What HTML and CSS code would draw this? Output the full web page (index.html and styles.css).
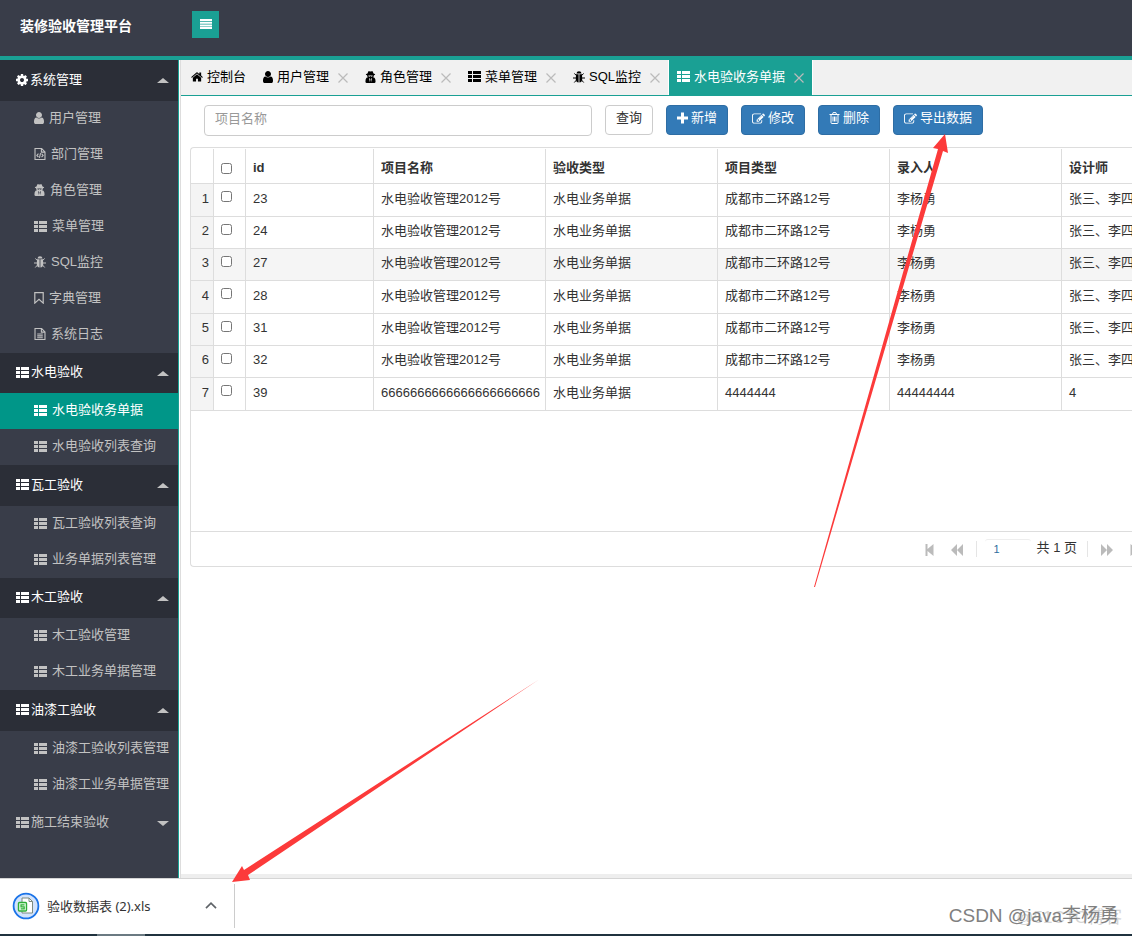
FILE: index.html
```html
<!DOCTYPE html>
<html lang="zh-CN">
<head>
<meta charset="utf-8">
<title>装修验收管理平台</title>
<link rel="stylesheet" href="styles.css">
</head>
<body>
<svg class="sprite" aria-hidden="true">
  <symbol id="list" viewBox="0 0 13 11"><path d="M0 0h4v3H0zM5 0h8v3H5zM0 4h4v3H0zM5 4h8v3H5zM0 8h4v3H0zM5 8h8v3H5z"/></symbol>
  <symbol id="cog" viewBox="128 128 1536 1536"><path d="M1152 896q0-106-75-181t-181-75-181 75-75 181 75 181 181 75 181-75 75-181zm512-109v222q0 12-8 23t-20 13l-185 28q-19 54-39 91 35 50 107 138 10 12 10 25t-9 23q-27 37-99 108t-94 71q-12 0-26-9l-138-108q-44 23-91 38-16 136-29 186-7 28-36 28h-222q-14 0-24.5-8.5t-11.5-21.5l-28-184q-49-16-90-37l-141 107q-10 9-25 9-14 0-25-11-126-114-165-168-7-10-7-23 0-12 8-23 15-21 51-66.5t54-70.5q-27-50-41-99l-183-27q-13-2-21-12.5t-8-23.5v-222q0-12 8-23t19-13l186-28q14-46 39-92-40-57-107-138-10-12-10-24 0-10 9-23 26-36 98.5-107.5t94.5-71.5q13 0 26 10l138 107q44-23 91-38 16-136 29-186 7-28 36-28h222q14 0 24.5 8.5t11.5 21.5l28 184q49 16 90 37l142-107q9-9 24-9 13 0 25 10 129 119 165 170 7 8 7 22 0 12-8 23-15 21-51 66.5t-54 70.5q26 50 41 98l183 28q13 2 21 12.5t8 23.5z"/></symbol>
  <symbol id="user" viewBox="256 128 1280 1536"><path d="M1536 1399q0 109-62.5 187t-150.5 78h-854q-88 0-150.5-78t-62.5-187q0-85 8.5-160.5t31.5-152 58.5-131 94-89 134.5-34.5q131 128 313 128t313-128q76 0 134.5 34.5t94 89 58.5 131 31.5 152 8.5 160.5zm-256-887q0 159-112.5 271.5t-271.5 112.5-271.5-112.5-112.5-271.5 112.5-271.5 271.5-112.5 271.5 112.5 112.5 271.5z"/></symbol>
  <symbol id="home" viewBox="64 250 1664 1290"><path d="M1472 992v480q0 26-19 45t-45 19h-384v-384h-256v384h-384q-26 0-45-19t-19-45v-480q0-1 .5-3t.5-3l575-474 575 474q1 2 1 6zm223-69l-62 74q-8 9-21 11h-3q-13 0-21-7l-692-577-692 577q-12 8-24 7-13-2-21-11l-62-74q-8-10-7-23.5t11-21.5l719-599q32-26 76-26t76 26l244 204v-195q0-14 9-23t23-9h192q14 0 23 9t9 23v408l219 182q10 8 11 21.5t-7 23.5z"/></symbol>
  <symbol id="edit" viewBox="0 128 1792 1408"><path d="M888 1184l116-116-152-152-116 116v56h96v96h56zm440-720q-16-16-33 1l-350 350q-17 17-1 33t33-1l350-350q17-17 1-33zm80 594v190q0 119-84.5 203.5t-203.5 84.5h-832q-119 0-203.5-84.5t-84.5-203.5v-832q0-119 84.5-203.5t203.5-84.5h832q63 0 117 25 15 7 18 23 3 17-9 29l-49 49q-14 14-32 8-23-6-45-6h-832q-66 0-113 47t-47 113v832q0 66 47 113t113 47h832q66 0 113-47t47-113v-126q0-13 9-22l64-64q15-15 35-7t20 29zm-96-738l288 288-672 672h-288v-288zm444 132l-92 92-288-288 92-92q28-28 68-28t68 28l152 152q28 28 28 68t-28 68z"/></symbol>
  <symbol id="secret" viewBox="0 0 11 13"><path fill-rule="evenodd" d="M3.200.4Q4 0 5.500.6 7 0 7.800.4L8.800 2.700Q10.600 3.100 10.600 3.700 10.200 4.400 9.200 4.500 9.100 6 8.300 6.800L9.800 7.300Q11 8.500 11 11.300 10.900 13 9.600 13H1.400Q.1 13 0 11.300 0 8.500 1.200 7.300L2.700 6.800Q1.900 6 1.800 4.500.8 4.400.4 3.700.4 3.100 2.200 2.700zM3.200 5v.8l1.600.3.500-.7h.4l.5.7 1.600-.3V5zM3.900 7.800L4.900 12.200 5.200 9.200 4.800 8.200zM7.100 7.800L6.100 12.200 5.800 9.200 6.200 8.200z"/></symbol>
  <symbol id="bug" viewBox="0 0 12 12"><path d="M3.500 2.600Q3.700.2 6 .2T8.500 2.600z"/><path d="M3 3.200H5.600V11.600Q3 11.300 2.800 8.500zM9 3.200H6.400V11.600Q9 11.300 9.200 8.500z"/><path fill="none" stroke="currentColor" d="M3.500 4.500L1.300 2.500M3 7H0M3.500 9L1.300 11.500M8.500 4.500l2.200-2M9 7h3M8.500 9l2.200 2.500"/></symbol>
  <symbol id="code" viewBox="0 0 12 13"><path fill="none" stroke="currentColor" stroke-width="1.200" d="M.6.600h7.200l3.600 3.600v8.200H.6zM7.500.6v3.900h3.900M4.300 6L2.600 8l1.700 2M7.700 6l1.700 2-1.700 2M6.600 5.500l-1.200 5.300"/></symbol>
  <symbol id="file" viewBox="0 0 12 13"><path fill="none" stroke="currentColor" stroke-width="1.200" d="M.6.600h7.200l3.600 3.600v8.200H.6zM7.500.6v3.900h3.900M3 6.500h6M3 8.500h6M3 10.500h6"/></symbol>
  <symbol id="bookmark" viewBox="0 0 10 12"><path fill="none" stroke="currentColor" stroke-width="1.200" d="M.8.700h8.400v10.400L5 7.400.8 11.100z"/></symbol>
  <symbol id="plus" viewBox="0 0 11 11"><path d="M4 0h3v4h4v3H7v4H4V7H0V4h4z"/></symbol>
  <symbol id="trash" viewBox="0 0 10 12"><path fill="none" stroke="currentColor" d="M0 2.500h10M3 2.300L3.600.6h2.800L7 2.300M1.500 2.500v8q0 1 1 1h5q1 0 1-1v-8M3.500 4.500v5M5 4.500v5M6.500 4.500v5"/></symbol>
  <symbol id="close" viewBox="0 0 10 10"><path fill="none" stroke="currentColor" stroke-width="1.200" d="M.5.5l9 9M9.500.5l-9 9"/></symbol>
  <symbol id="bars" viewBox="0 0 12 10"><path d="M0 0h12v2H0zM0 2.700h12v2H0zM0 5.400h12v2H0zM0 8h12v2H0z"/></symbol>
  <symbol id="first" viewBox="0 0 9 12"><path d="M0 0h2v5l6-5v12L2 7v5H0z"/></symbol>
  <symbol id="prev" viewBox="0 0 12 12"><path d="M0 6l6-6v12zM6 6l6-6v12z"/></symbol>
  <symbol id="next" viewBox="0 0 12 12"><path d="M0 0l6 6-6 6zM6 0l6 6-6 6z"/></symbol>
  <symbol id="last" viewBox="0 0 9 12"><path d="M1 0v12l6-5v5h2V0H7v5z"/></symbol>
</svg>

<div class="app">
  <header class="topbar">
    <h1 class="brand">装修验收管理平台</h1>
    <button class="toggle" type="button" aria-label="折叠菜单"><svg class="i12"><use href="#bars"/></svg></button>
  </header>

  <div class="body">
    <nav class="side">
      <section class="group open">
        <button class="head" type="button"><svg class="i12"><use href="#cog"/></svg>系统管理</button>
        <a class="item" href="#"><svg class="i10"><use href="#user"/></svg>用户管理</a>
        <a class="item" href="#"><svg class="i12"><use href="#code"/></svg>部门管理</a>
        <a class="item" href="#"><svg class="i11"><use href="#secret"/></svg>角色管理</a>
        <a class="item" href="#"><svg class="i13"><use href="#list"/></svg>菜单管理</a>
        <a class="item" href="#"><svg class="i12"><use href="#bug"/></svg>SQL监控</a>
        <a class="item" href="#"><svg class="i10"><use href="#bookmark"/></svg>字典管理</a>
        <a class="item" href="#"><svg class="i12"><use href="#file"/></svg>系统日志</a>
      </section>
      <section class="group open">
        <button class="head" type="button"><svg class="i13"><use href="#list"/></svg>水电验收</button>
        <a class="item current" href="#"><svg class="i13"><use href="#list"/></svg>水电验收务单据</a>
        <a class="item" href="#"><svg class="i13"><use href="#list"/></svg>水电验收列表查询</a>
      </section>
      <section class="group open">
        <button class="head" type="button"><svg class="i13"><use href="#list"/></svg>瓦工验收</button>
        <a class="item" href="#"><svg class="i13"><use href="#list"/></svg>瓦工验收列表查询</a>
        <a class="item" href="#"><svg class="i13"><use href="#list"/></svg>业务单据列表管理</a>
      </section>
      <section class="group open">
        <button class="head" type="button"><svg class="i13"><use href="#list"/></svg>木工验收</button>
        <a class="item" href="#"><svg class="i13"><use href="#list"/></svg>木工验收管理</a>
        <a class="item" href="#"><svg class="i13"><use href="#list"/></svg>木工业务单据管理</a>
      </section>
      <section class="group open">
        <button class="head" type="button"><svg class="i13"><use href="#list"/></svg>油漆工验收</button>
        <a class="item" href="#"><svg class="i13"><use href="#list"/></svg>油漆工验收列表管理</a>
        <a class="item" href="#"><svg class="i13"><use href="#list"/></svg>油漆工业务单据管理</a>
      </section>
      <section class="group">
        <button class="head" type="button"><svg class="i13"><use href="#list"/></svg>施工结束验收</button>
      </section>
    </nav>

    <main class="main">
      <div class="tabs">
        <a class="tab" href="#"><svg class="i12"><use href="#home"/></svg>控制台</a>
        <a class="tab" href="#"><svg class="i10"><use href="#user"/></svg>用户管理<svg class="x"><use href="#close"/></svg></a>
        <a class="tab" href="#"><svg class="i11"><use href="#secret"/></svg>角色管理<svg class="x"><use href="#close"/></svg></a>
        <a class="tab" href="#"><svg class="i13"><use href="#list"/></svg>菜单管理<svg class="x"><use href="#close"/></svg></a>
        <a class="tab" href="#"><svg class="i12"><use href="#bug"/></svg>SQL监控<svg class="x"><use href="#close"/></svg></a>
        <a class="tab active" href="#"><svg class="i13"><use href="#list"/></svg>水电验收务单据<svg class="x"><use href="#close"/></svg></a>
      </div>

      <form class="tools">
        <input class="search" type="text" placeholder="项目名称" aria-label="项目名称">
        <button class="btn" type="button">查询</button>
        <button class="btn primary" type="button"><svg class="i11"><use href="#plus"/></svg>新增</button>
        <button class="btn primary" type="button"><svg class="i13"><use href="#edit"/></svg>修改</button>
        <button class="btn primary" type="button"><svg class="i11"><use href="#trash"/></svg>删除</button>
        <button class="btn primary" type="button"><svg class="i13"><use href="#edit"/></svg>导出数据</button>
      </form>

      <div class="grid">
        <div class="rows">
          <table>
            <colgroup><col class="c-num"><col class="c-check"><col class="c-id"><col class="c-text"><col class="c-text"><col class="c-text"><col class="c-text"><col class="c-text"></colgroup>
            <thead><tr><th></th><th class="check"><input type="checkbox" aria-label="全选"></th><th>id</th><th>项目名称</th><th>验收类型</th><th>项目类型</th><th>录入人</th><th>设计师</th></tr></thead>
            <tbody>
              <tr><td class="num">1</td><td class="check"><input type="checkbox" aria-label="选择 23"></td><td>23</td><td>水电验收管理2012号</td><td>水电业务单据</td><td>成都市二环路12号</td><td>李杨勇</td><td>张三、李四</td></tr>
              <tr><td class="num">2</td><td class="check"><input type="checkbox" aria-label="选择 24"></td><td>24</td><td>水电验收管理2012号</td><td>水电业务单据</td><td>成都市二环路12号</td><td>李杨勇</td><td>张三、李四</td></tr>
              <tr class="hover"><td class="num">3</td><td class="check"><input type="checkbox" aria-label="选择 27"></td><td>27</td><td>水电验收管理2012号</td><td>水电业务单据</td><td>成都市二环路12号</td><td>李杨勇</td><td>张三、李四</td></tr>
              <tr><td class="num">4</td><td class="check"><input type="checkbox" aria-label="选择 28"></td><td>28</td><td>水电验收管理2012号</td><td>水电业务单据</td><td>成都市二环路12号</td><td>李杨勇</td><td>张三、李四</td></tr>
              <tr><td class="num">5</td><td class="check"><input type="checkbox" aria-label="选择 31"></td><td>31</td><td>水电验收管理2012号</td><td>水电业务单据</td><td>成都市二环路12号</td><td>李杨勇</td><td>张三、李四</td></tr>
              <tr><td class="num">6</td><td class="check"><input type="checkbox" aria-label="选择 32"></td><td>32</td><td>水电验收管理2012号</td><td>水电业务单据</td><td>成都市二环路12号</td><td>李杨勇</td><td>张三、李四</td></tr>
              <tr><td class="num">7</td><td class="check"><input type="checkbox" aria-label="选择 39"></td><td>39</td><td>6666666666666666666666</td><td>水电业务单据</td><td>4444444</td><td>44444444</td><td>4</td></tr>
            </tbody>
          </table>
        </div>
        <div class="pager">
          <button class="pg" type="button" aria-label="首页"><svg class="i10"><use href="#first"/></svg></button>
          <button class="pg" type="button" aria-label="上一页"><svg class="i12"><use href="#prev"/></svg></button>
          <span class="sep"></span>
          <input class="page" type="text" value="1" aria-label="页码">
          <span>共 1 页</span>
          <span class="sep"></span>
          <button class="pg" type="button" aria-label="下一页"><svg class="i12"><use href="#next"/></svg></button>
          <button class="pg" type="button" aria-label="末页"><svg class="i10"><use href="#last"/></svg></button>
        </div>
      </div>
      <div class="foot"></div>
    </main>
  </div>

  <footer class="downloads">
    <a class="download" href="#">
      <svg class="sheet" viewBox="0 0 28 28"><circle cx="14" cy="14" r="12.400" fill="#d2e3fc" stroke="#1a73e8" stroke-width="1.800"/><path d="M10 6h7l3.500 3.500V21H10z" fill="#fff" stroke="#7d8a80"/><path d="M17 6v3.500h3.500" fill="none" stroke="#7d8a80"/><rect x="6.500" y="10.500" width="8" height="8.500" rx="1" fill="#eaffea" stroke="#2fae38" stroke-width="1.400"/><path d="M12.500 12.900H9v1.900h3.200v2H8.700" fill="none" stroke="#2fae38" stroke-width="1.200"/></svg>
      <span>验收数据表 (2).xls</span>
    </a>
    <button class="more" type="button" aria-label="更多"><svg viewBox="0 0 10 6"><path d="M.7 5.300L5 1l4.300 4.300" fill="none" stroke="#5f6368" stroke-width="1.400"/></svg></button>
  </footer>
  <div class="taskbar"><span></span></div>

  <svg class="marks" viewBox="0 0 1132 936" aria-hidden="true">
    <path d="M945 134L933 148l5 1L814 587h1L943 151l5 2z"/>
    <path d="M232 882l10-16 2 4L539 679.500 248 875l2 5z"/>
  </svg>
  <span class="stamp faint">@51CTO博客</span>
  <span class="stamp">CSDN @java李杨勇</span>
</div>
</body>
</html>
```

FILE: styles.css
```css
* { box-sizing: border-box; }

body {
  margin: 0;
  background: #fff;
  color: #333;
  font: 13px/20px "Liberation Sans", "Noto Sans CJK SC", sans-serif;
}

button, input { font: inherit; color: inherit; }
button { cursor: pointer; }
a { color: inherit; text-decoration: none; }
svg { fill: currentColor; flex: none; }

.sprite { position: absolute; width: 0; height: 0; }
.i10 { width: 10px; height: 12px; }
.i11 { width: 11px; height: 12px; }
.i12 { width: 12px; height: 12px; }
.i13 { width: 13px; height: 11px; }

.app {
  position: relative;
  display: flex;
  flex-direction: column;
  min-height: 100vh;
  overflow: hidden;
}

/* Top bar */
.topbar {
  display: flex;
  align-items: flex-start;
  height: 60px;
  background: #393d49;
  border-bottom: 4px solid #1aa094;
}
.brand {
  width: 192px;
  margin: 0;
  padding: 16px 0 0 20px;
  color: #fff;
  font-size: 14px;
  line-height: 20px;
}
.toggle {
  display: grid;
  place-items: center;
  width: 27px;
  height: 27px;
  margin-top: 11px;
  padding: 0 0 2px;
  border: 0;
  background: #1aa094;
  color: #fff;
}

.body { display: flex; flex: 1; }

/* Side menu */
.side {
  flex: none;
  width: 179px;
  background: #393d49;
  border-right: 1px solid #1aa094;
  color: #c2c2c2;
}
.head {
  display: flex;
  align-items: center;
  gap: 2px;
  width: 100%;
  height: 40px;
  padding: 0 9px 2px 16px;
  border: 0;
  background: none;
  text-align: left;
}
.group:nth-child(odd) .head { height: 41px; }
.head::after {
  content: "";
  margin: 2px 0 0 auto;
  border: 6px solid transparent;
  border-top: 5px solid #c2c2c2;
  border-bottom: 0;
}
.open .head { background: #2b2e37; color: #fff; }
.open .head::after { border-top: 0; border-bottom: 5px solid #c2c2c2; }
.item {
  display: flex;
  align-items: center;
  gap: 5px;
  height: 36px;
  padding: 0 0 2px 34px;
  white-space: nowrap;
}
.current { background: #009688; color: #fff; }

/* Main area */
.main {
  display: flex;
  flex: 1;
  flex-direction: column;
  min-width: 0;
  margin-left: 1px;
  border-left: 1px solid #ddd;
}
.tabs {
  display: flex;
  height: 36px;
  background: #f1f1f1;
  border-bottom: 1px solid #1aa094;
  color: #000;
}
.tab {
  display: flex;
  align-items: center;
  gap: 4px;
  padding: 0 8px 2px 10px;
  white-space: nowrap;
}
.tab + .tab { padding-left: 9px; }
.tab .x { width: 10px; height: 10px; margin: 2px 0 0 5px; color: #bbb; }
.tab + .active {
  padding-left: 8px;
  background: #1aa094;
  color: #fff;
  border: solid #fff;
  border-width: 0 1px;
}

.tools {
  display: flex;
  align-items: flex-start;
  gap: 13px;
  padding: 9px 149px 11px 23px;
}
.search {
  flex: 1;
  min-width: 0;
  height: 31px;
  padding: 0 10px 4px;
  border: 1px solid #ccc;
  border-radius: 4px;
}
.search::placeholder { color: #999; opacity: 1; }
.btn {
  display: flex;
  align-items: center;
  gap: 3px;
  height: 30px;
  padding: 0 10px 4px;
  border: 1px solid #ccc;
  border-radius: 4px;
  background: #fff;
}
.primary { background: #337ab7; border-color: #2e6da4; color: #fff; }

/* Data grid */
.grid {
  margin-left: 9px;
  border: 1px solid #ddd;
  border-right: 0;
  border-radius: 4px 0 0 4px;
  overflow: hidden;
}
.rows { height: 383px; padding-top: 1px; overflow: hidden; }
table {
  width: 1043px;
  table-layout: fixed;
  border-collapse: separate;
  border-spacing: 0;
}
.c-num { width: 23px; }
.c-check { width: 32px; }
.c-id { width: 128px; }
.c-text { width: 172px; }
th, td {
  height: 32px;
  padding: 0 7px 3px;
  border: solid #ddd;
  border-width: 0 1px 1px 0;
  text-align: left;
  white-space: nowrap;
}
th { height: 35px; padding-bottom: 0; padding-top: 4px; }
tbody tr:nth-child(3n + 1) td { height: 33px; }
.hover { background: #f5f5f5; }
.num { background: #f4f4f4; padding: 0 4px 3px; text-align: right; }
.check { padding-left: 7px; padding-right: 0; }
.check input { display: block; width: 11px; height: 11px; margin: 0; }
td.check { padding-bottom: 7px; }

.pager {
  display: flex;
  align-items: center;
  justify-content: flex-end;
  height: 35px;
  padding-bottom: 2px;
  border-top: 1px solid #ddd;
  margin-right: -15px;
}
.pg {
  display: grid;
  place-items: center;
  width: 27px;
  height: 20px;
  padding: 4px 0 0;
  border: 0;
  background: none;
  color: #bbb;
}
.sep { width: 1px; height: 16px; margin: 2px 5px 0; background: #e5e5e5; }
.sep + .page { margin-left: 3px; }
.page {
  width: 46px;
  height: 18px;
  margin-right: 6px;
  padding: 0 9px;
  border: 0;
  border-top: 1px solid #eee;
  border-radius: 3px;
  color: #2e6e9e;
  font-size: 11px;
}
.page ~ .sep { margin-left: 10px; }

.foot { height: 4px; margin-top: auto; background: #eee; }

/* Download shelf */
.downloads {
  display: flex;
  align-items: center;
  height: 56px;
  padding-bottom: 2px;
  border-top: 1px solid #d5d5d5;
  background: #fff;
}
.download {
  display: flex;
  align-items: center;
  gap: 7px;
  width: 192px;
  padding-left: 12px;
  font-family: "Noto Sans", "Noto Sans CJK SC", sans-serif;
  white-space: nowrap;
}
.sheet { width: 28px; height: 28px; }
.more {
  display: grid;
  place-items: center;
  width: 43px;
  height: 44px;
  padding: 0 5px 0 0;
  border: 0;
  border-right: 1px solid #ccc;
  background: none;
}
.more svg { width: 12px; height: 7px; }
.taskbar { height: 2px; padding-left: 97px; background: #20333f; }
.taskbar span { display: block; width: 48px; height: 2px; background: #6b7a82; }

/* Annotations lying over the page */
.marks {
  position: absolute;
  top: 0;
  left: 0;
  width: 1132px;
  height: 936px;
  fill: #fc3a3a;
  pointer-events: none;
}
.stamp {
  position: absolute;
  right: 13px;
  bottom: 8px;
  color: #808080;
  font-size: 19px;
  line-height: 24px;
  pointer-events: none;
}
.faint { right: 10px; bottom: 6px; color: #d5d5d5; font-size: 17px; }
```
